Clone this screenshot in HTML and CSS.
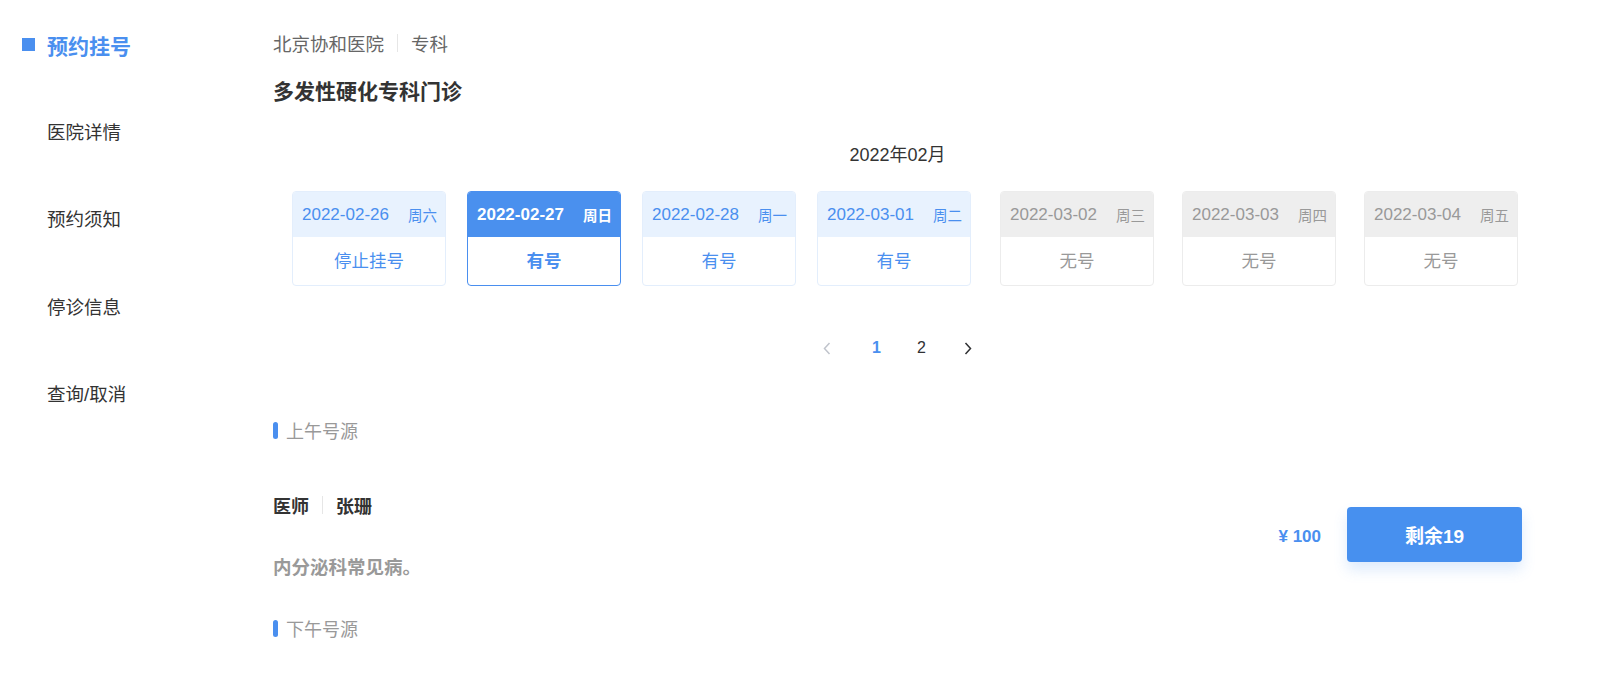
FILE: index.html
```html
<!DOCTYPE html>
<html lang="zh-CN">
<head>
<meta charset="utf-8">
<title>预约挂号</title>
<link rel="stylesheet" href="styles.css">
</head>
<body>
<div class="page">
  <aside class="sidebar">
    <div class="nav-item active"><span class="marker"></span><span>预约挂号</span></div>
    <div class="nav-item"><span class="marker"></span><span>医院详情</span></div>
    <div class="nav-item"><span class="marker"></span><span>预约须知</span></div>
    <div class="nav-item"><span class="marker"></span><span>停诊信息</span></div>
    <div class="nav-item"><span class="marker"></span><span>查询/取消</span></div>
  </aside>
  <main class="main">
    <div class="crumb"><span>北京协和医院</span><span class="vsep"></span><span>专科</span></div>
    <h1 class="title">多发性硬化专科门诊</h1>
    <div class="month">2022年02月</div>
    <div class="cards">
      <div class="card avail">
        <div class="card-head"><span class="date">2022-02-26</span><span class="week">周六</span></div>
        <div class="card-body">停止挂号</div>
      </div>
      <div class="card avail selected">
        <div class="card-head"><span class="date">2022-02-27</span><span class="week">周日</span></div>
        <div class="card-body">有号</div>
      </div>
      <div class="card avail">
        <div class="card-head"><span class="date">2022-02-28</span><span class="week">周一</span></div>
        <div class="card-body">有号</div>
      </div>
      <div class="card avail">
        <div class="card-head"><span class="date">2022-03-01</span><span class="week">周二</span></div>
        <div class="card-body">有号</div>
      </div>
      <div class="card none first-none">
        <div class="card-head"><span class="date">2022-03-02</span><span class="week">周三</span></div>
        <div class="card-body">无号</div>
      </div>
      <div class="card none">
        <div class="card-head"><span class="date">2022-03-03</span><span class="week">周四</span></div>
        <div class="card-body">无号</div>
      </div>
      <div class="card none">
        <div class="card-head"><span class="date">2022-03-04</span><span class="week">周五</span></div>
        <div class="card-body">无号</div>
      </div>
    </div>
    <div class="pager">
      <span class="pg prev"><svg width="8" height="13" viewBox="0 0 8 13"><path d="M6.5 1 L1.5 6.5 L6.5 12" fill="none" stroke="#c0c4cc" stroke-width="1.5"/></svg></span>
      <span class="pg cur">1</span>
      <span class="pg">2</span>
      <span class="pg next"><svg width="8" height="13" viewBox="0 0 8 13"><path d="M1.5 1 L6.5 6.5 L1.5 12" fill="none" stroke="#303133" stroke-width="1.5"/></svg></span>
    </div>
    <div class="section am"><span class="bar"></span><span>上午号源</span></div>
    <div class="doctor-row">
      <div class="doctor-info">
        <div class="doctor-name"><span>医师</span><span class="vsep"></span><span>张珊</span></div>
        <div class="doctor-desc">内分泌科常见病。</div>
      </div>
      <div class="doctor-action">
        <span class="price">¥ 100</span>
        <button class="btn">剩余19</button>
      </div>
    </div>
    <div class="section pm"><span class="bar"></span><span>下午号源</span></div>
  </main>
</div>
</body>
</html>
```
FILE: styles.css
```css
* { box-sizing: border-box; }
html, body { margin: 0; padding: 0; background: #fff; }
body {
  font-family: "Liberation Sans", "Noto Sans CJK SC", sans-serif;
  color: #333;
}
.page { display: flex; width: 1615px; }
.sidebar { width: 273px; flex: none; padding-top: 1px; }
.nav-item {
  height: 87px;
  display: flex;
  align-items: center;
  padding-left: 22px;
  font-size: 18.5px;
  color: #333;
}
.nav-item + .nav-item { height: 87.5px; }
.nav-item:nth-child(2) { margin-top: -1px; }
.marker { width: 13px; height: 13px; margin-right: 12px; flex: none; }
.nav-item.active { color: #4a8fef; font-weight: bold; font-size: 21px; }
.nav-item.active .marker { background: #4a8fef; }
.main { width: 1249px; flex: none; }
.crumb {
  margin-top: 31px;
  height: 24px;
  display: flex;
  align-items: center;
  font-size: 18.5px;
  color: #666;
}
.vsep { width: 1px; height: 18px; background: #e6e6e6; margin: 0 13px; }
.title {
  margin: 22px 0 0;
  height: 30px;
  line-height: 30px;
  font-size: 21px;
  font-weight: bold;
  color: #333;
}
.month {
  margin-top: 36px;
  height: 24px;
  line-height: 24px;
  text-align: center;
  font-size: 18px;
  color: #333;
}
.cards { display: flex; margin-top: 24px; padding-left: 19px; }
.card {
  width: 154px;
  height: 95px;
  border-radius: 4px;
  border: 1px solid #e3eefc;
  overflow: hidden;
  margin-right: 21px;
  flex: none;
}
.card.first-none { margin-left: 8px; margin-right: 28px; }
.card.none { margin-right: 28px; border-color: #ececec; }
.card-head {
  height: 45px;
  display: flex;
  align-items: center;
  justify-content: space-between;
  padding: 0 8px 0 9px;
  background: #e8f2fe;
  color: #4a8fef;
}
.date { font-size: 17px; }
.week { font-size: 14.5px; }
.card-body {
  height: 48px;
  line-height: 48px;
  text-align: center;
  font-size: 17.5px;
  color: #4a8fef;
}
.card.selected { border-color: #4a8fef; }
.card.selected .card-head { background: #4a90ee; color: #fff; font-weight: bold; }
.card.selected .card-body { font-weight: bold; }
.card.none .card-head { background: #eeeeee; color: #999; }
.card.none .card-body { color: #999; }
.pager {
  margin-top: 50px;
  height: 24px;
  display: flex;
  justify-content: center;
  align-items: center;
  font-size: 16px;
  color: #303133;
}
.pg { width: 46px; text-align: center; line-height: 24px; display: flex; justify-content: center; align-items: center; }
.pg.prev { width: 50px; justify-content: flex-start; padding-left: 18px; }
.pg.cur { width: 44px; color: #4a8fef; font-weight: bold; }
.section {
  height: 24px;
  display: flex;
  align-items: center;
  font-size: 18px;
  color: #999;
}
.section.am { margin-top: 58px; }
.section.pm { margin-top: 36px; }
.bar { width: 5px; height: 17px; border-radius: 3px; background: #4a8fef; margin-right: 8px; }
.doctor-row {
  margin-top: 51px;
  display: flex;
  align-items: center;
  justify-content: space-between;
}
.doctor-name {
  height: 24px;
  display: flex;
  align-items: center;
  font-size: 18px;
  font-weight: bold;
  color: #333;
}
.doctor-desc {
  margin-top: 39px;
  height: 24px;
  line-height: 24px;
  font-size: 18.5px;
  font-weight: bold;
  color: #999;
}
.doctor-action { display: flex; align-items: center; margin-bottom: 4px; }
.price { font-size: 17px; font-weight: bold; color: #4a8fef; margin-right: 26px; margin-top: 5px; }
.btn {
  width: 175px;
  height: 55px;
  border: none;
  border-radius: 4px;
  background: #4790ef;
  color: #fff;
  font-family: inherit;
  font-size: 19px;
  font-weight: bold;
  box-shadow: 0 8px 14px rgba(71, 144, 239, 0.18);
  padding: 0;
}
```
